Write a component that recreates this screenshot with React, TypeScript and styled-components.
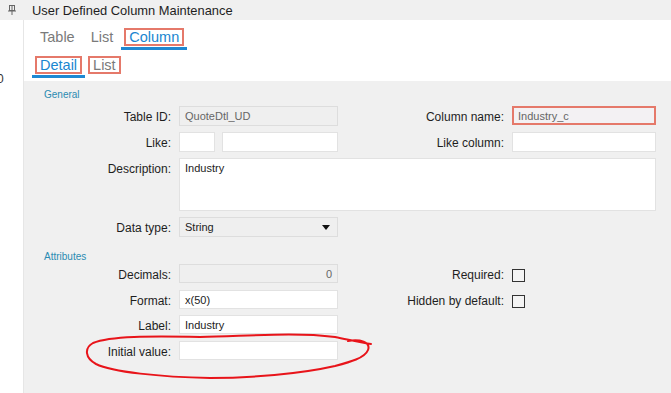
import styled, { createGlobalStyle } from "styled-components"

const GlobalStyle = createGlobalStyle`
    html, body {
        margin: 0;
        padding: 0;
        background: #FFFFFF;
    }
    body {
        font-family: "Liberation Sans", Arial, sans-serif;
    }
`

const Page = styled.div`
    width: 671px;
    height: 393px;
    overflow: hidden;
    display: flex;
    flex-direction: column;
    background: #FFFFFF;
`

const TitleBar = styled.header`
    height: 20px;
    flex: 0 0 20px;
    background: #F0F0F0;
    display: flex;
    align-items: center;
    padding-left: 8px;
    gap: 16px;
`

const Title = styled.div`
    font-size: 12.9px;
    color: #1E1E1E;
    white-space: nowrap;
`

const Body = styled.div`
    flex: 1;
    display: flex;
    min-height: 0;
`

const Strip = styled.aside`
    width: 23px;
    flex: 0 0 23px;
    border-right: 1px solid #E6E6E6;
    background: #FFFFFF;
    overflow: hidden;
`

const StripDigit = styled.div`
    margin: 52px 0 0 -3px;
    font-size: 12px;
    color: #333333;
`

const Main = styled.main`
    flex: 1;
    display: flex;
    flex-direction: column;
`

const TabArea = styled.nav`
    background: #FFFFFF;
    padding: 8px 0 3px 8px;
    display: flex;
    flex-direction: column;
    gap: 6px;
`

const TabRow = styled.div`
    display: flex;
`

const Tab = styled.div<{ $active?: boolean }>`
    padding: 0 3px;
    border-bottom: 3px solid ${p => (p.$active ? "#1E88D2" : "transparent")};
`

const TabLabel = styled.span<{ $active?: boolean; $marked?: boolean }>`
    display: block;
    border: 2px solid ${p => (p.$marked ? "#E5796A" : "transparent")};
    padding: 0 3px;
    margin-bottom: 1px;
    line-height: 14px;
    font-size: 14.5px;
    color: ${p => (p.$active ? "#1A86D0" : "#7A7A7A")};
`

const Panel = styled.section`
    flex: 1;
    position: relative;
    background: #F0F0F0;
    padding-top: 8px;
`

const SectionTitle = styled.div<{ $gap?: number }>`
    margin: ${p => p.$gap ?? 0}px 0 0 20px;
    height: 12px;
    line-height: 12px;
    font-size: 10px;
    color: #2A8BB2;
`

const FormGrid = styled.div<{ $top: number; $rowGap: number }>`
    margin-top: ${p => p.$top}px;
    display: grid;
    grid-template-columns: 147px 159px 158px 144px;
    column-gap: 8px;
    row-gap: ${p => p.$rowGap}px;
    align-items: start;
`

const Label = styled.label`
    text-align: right;
    padding-top: 4px;
    line-height: 14px;
    font-size: 12px;
    color: #1E1E1E;
    white-space: nowrap;
`

const Field = styled.div<{ $disabled?: boolean; $marked?: boolean; $h?: number; $right?: boolean }>`
    box-sizing: border-box;
    height: ${p => p.$h ?? 20}px;
    background: ${p => (p.$disabled ? "#EFEFEF" : p.$marked ? "#F3F1F3" : "#FFFFFF")};
    border: ${p => (p.$marked ? "2px solid #E5796A" : p.$disabled ? "1px solid #DDDDDD" : "1px solid #E2E2E2")};
    padding: ${p => (p.$marked ? "1px 4px" : "2px 5px")};
    text-align: ${p => (p.$right ? "right" : "left")};
    line-height: 14px;
    font-size: 11px;
    color: ${p => (p.$disabled || p.$marked ? "#666666" : "#222222")};
    overflow: hidden;
    white-space: nowrap;
`

const WideField = styled(Field)`
    grid-column: 2 / 5;
`

const Pair = styled.div`
    display: flex;
    gap: 7px;
`

const SelectBox = styled(Field)`
    display: flex;
    justify-content: space-between;
    align-items: center;
    background: #EFEFEF;
    border-color: #DDDDDD;
`

const Caret = styled.span`
    width: 0;
    height: 0;
    margin-right: 2px;
    border-left: 4px solid transparent;
    border-right: 4px solid transparent;
    border-top: 5px solid #111111;
`

const Check = styled.span`
    display: block;
    box-sizing: border-box;
    width: 13px;
    height: 13px;
    margin-top: 5px;
    border: 1px solid #333333;
    background: #F4F4F4;
`

function PinIcon() {
    return (
        <svg width="8" height="10" viewBox="0 0 8 10">
            <rect x="1.5" y="0.5" width="5" height="5" fill="none" stroke="#666" />
            <line x1="4" y1="0.5" x2="4" y2="5" stroke="#666" />
            <line x1="0" y1="6" x2="8" y2="6" stroke="#666" />
            <line x1="4" y1="6" x2="4" y2="10" stroke="#666" />
        </svg>
    )
}

const Scribble = styled.svg`
    position: absolute;
    left: 0;
    top: 0;
    pointer-events: none;
`

export default function App() {
    return <Page>
        <GlobalStyle />
        <TitleBar>
            <PinIcon />
            <Title>User Defined Column Maintenance</Title>
        </TitleBar>
        <Body>
            <Strip>
                <StripDigit>0</StripDigit>
            </Strip>
            <Main>
                <TabArea>
                    <TabRow>
                        <Tab><TabLabel>Table</TabLabel></Tab>
                        <Tab><TabLabel>List</TabLabel></Tab>
                        <Tab $active><TabLabel $active $marked>Column</TabLabel></Tab>
                    </TabRow>
                    <TabRow>
                        <Tab $active><TabLabel $active $marked>Detail</TabLabel></Tab>
                        <Tab><TabLabel $marked>List</TabLabel></Tab>
                    </TabRow>
                </TabArea>
                <Panel>
                    <SectionTitle>General</SectionTitle>
                    <FormGrid $top={5} $rowGap={6}>
                        <Label>Table ID:</Label>
                        <Field $disabled>QuoteDtl_UD</Field>
                        <Label>Column name:</Label>
                        <Field $marked $h={19}>Industry_c</Field>

                        <Label>Like:</Label>
                        <Pair>
                            <Field style={{ width: 36 }} />
                            <Field style={{ flex: 1 }} />
                        </Pair>
                        <Label>Like column:</Label>
                        <Field />

                        <Label>Description:</Label>
                        <WideField $h={53}>Industry</WideField>

                        <Label>Data type:</Label>
                        <SelectBox $h={20}>String<Caret /></SelectBox>
                    </FormGrid>
                    <SectionTitle $gap={14}>Attributes</SectionTitle>
                    <FormGrid $top={1} $rowGap={6.5}>
                        <Label>Decimals:</Label>
                        <Field $disabled $right $h={19}>0</Field>
                        <Label>Required:</Label>
                        <Check />

                        <Label>Format:</Label>
                        <Field $h={19}>x(50)</Field>
                        <Label>Hidden by default:</Label>
                        <Check />

                        <Label>Label:</Label>
                        <Field $h={19}>Industry</Field>
                        <span />
                        <span />

                        <Label>Initial value:</Label>
                        <Field $h={19} />
                    </FormGrid>
                    <Scribble width="647" height="312" viewBox="24 81 647 312">
                        <path
                            d="M 348 341 C 360 339, 371 342, 368 350 C 365 358, 350 362, 335 366 C 300 374, 250 378, 210 378 C 160 377, 112 372, 96 364 C 85 358, 84 348, 93 343 C 110 336, 150 336, 200 337 C 250 336, 295 332, 335 337 C 350 340, 362 343, 371 344"
                            fill="none"
                            stroke="#E8141A"
                            strokeWidth="2"
                            strokeLinecap="round"
                        />
                    </Scribble>
                </Panel>
            </Main>
        </Body>
    </Page>
}
